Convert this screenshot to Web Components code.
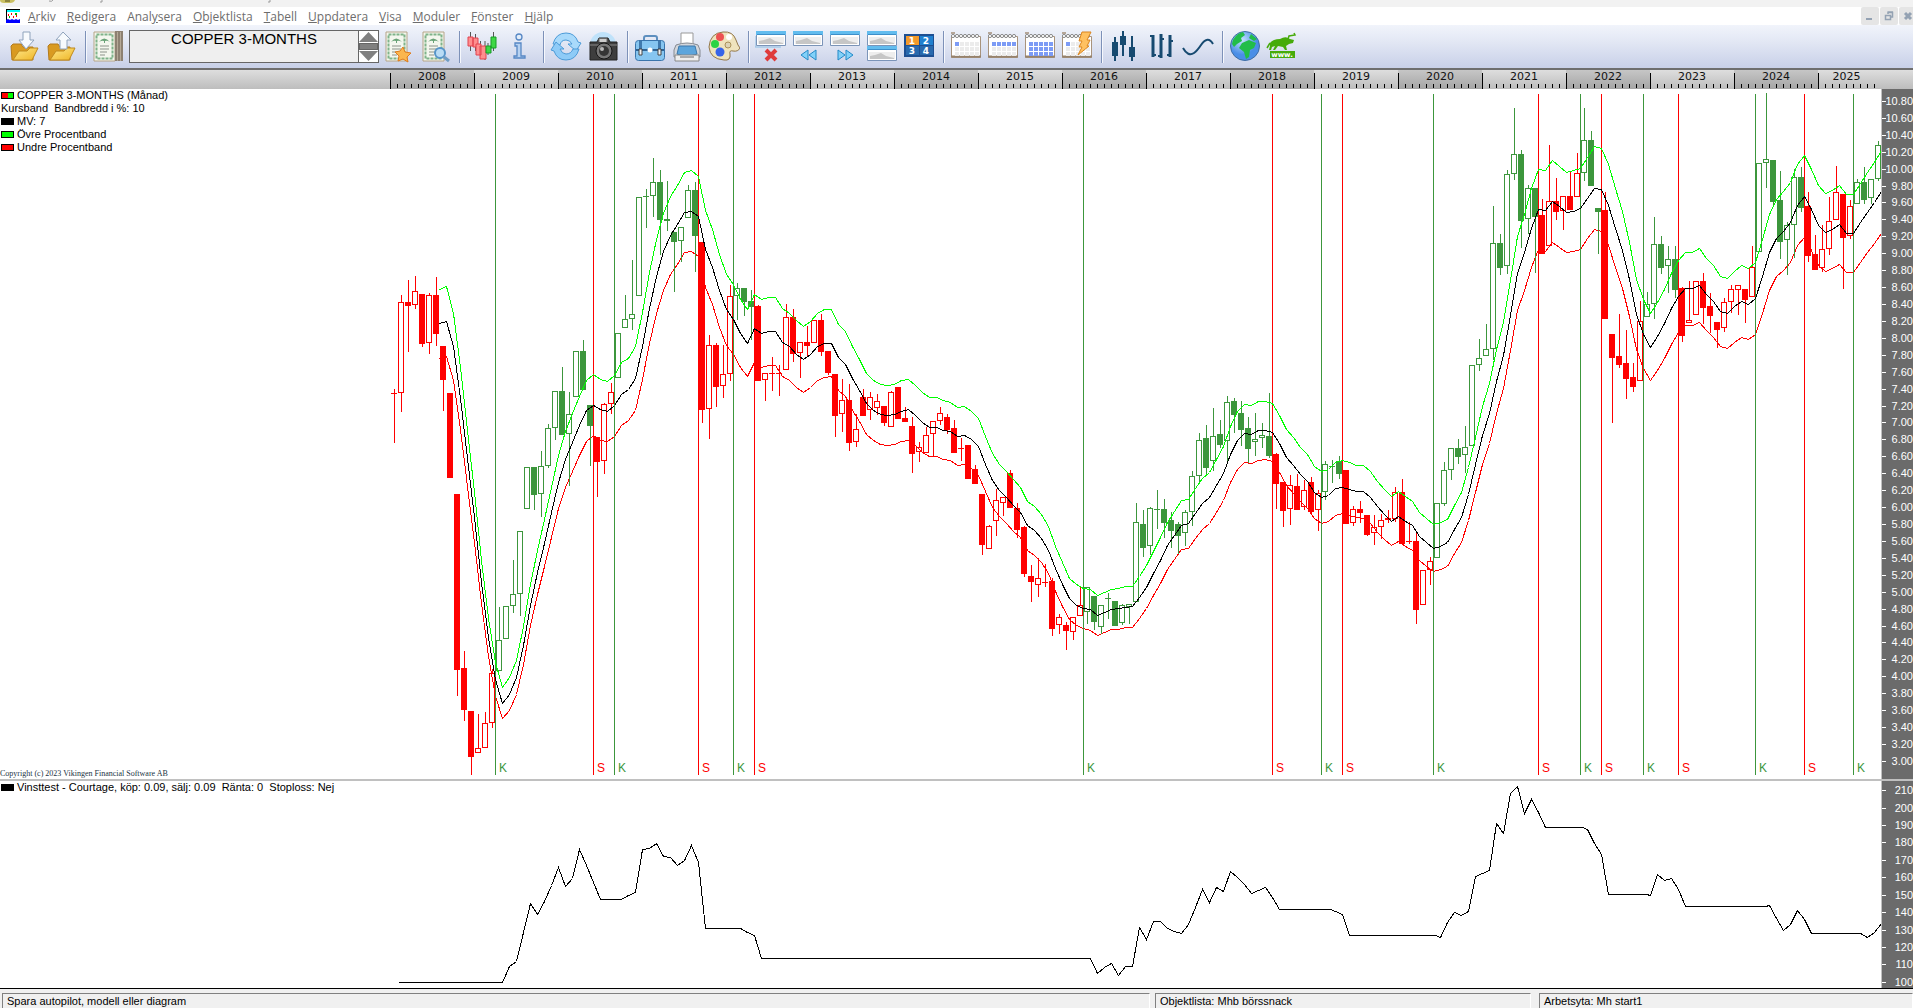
<!DOCTYPE html>
<html lang="sv">
<head>
<meta charset="utf-8">
<title>Vikingen</title>
<style>
	html, body {
		margin: 0;
		height: 100%;
	}

	body {
		display: flex;
		flex-direction: column;
		overflow: hidden;
		background: #fff;
		color: #000;
		font: 12px/13px "Liberation Sans", Arial, sans-serif;
	}
</style>
</head>
<body>
	<title-strip></title-strip>
	<menu-bar>
		<a href="#arkiv"><u>A</u>rkiv</a>
		<a href="#redigera"><u>R</u>edigera</a>
		<a href="#analysera">Anal<u>y</u>sera</a>
		<a href="#objektlista"><u>O</u>bjektlista</a>
		<a href="#tabell"><u>T</u>abell</a>
		<a href="#uppdatera"><u>U</u>ppdatera</a>
		<a href="#visa"><u>V</u>isa</a>
		<a href="#moduler"><u>M</u>oduler</a>
		<a href="#fonster"><u>F</u>önster</a>
		<a href="#hjalp"><u>H</u>jälp</a>
	</menu-bar>
	<tool-bar></tool-bar>
	<time-ruler from="2008" to="2025"></time-ruler>
	<chart-pane class="price">
		<legend-row slot="legend" colors="red,lime">COPPER 3-MONTHS (Månad)</legend-row>
		<legend-row slot="legend">Kursband&nbsp; Bandbredd i %: 10</legend-row>
		<legend-row slot="legend" colors="black">MV: 7</legend-row>
		<legend-row slot="legend" colors="lime">Övre Procentband</legend-row>
		<legend-row slot="legend" colors="red">Undre Procentband</legend-row>
		<price-plot></price-plot>
		<span slot="note">Copyright (c) 2023 Vikingen Financial Software AB</span>
		<value-axis slot="axis" class="prices" from="10.8" to="3" step="0.2" digits="2"></value-axis>
	</chart-pane>
	<chart-pane class="equity" grow>
		<legend-row slot="legend" colors="black">Vinsttest - Courtage, köp: 0.09, sälj: 0.09&nbsp; Ränta: 0&nbsp; Stoploss: Nej</legend-row>
		<equity-plot></equity-plot>
		<value-axis slot="axis" class="values" from="210" to="100" step="10" digits="0"></value-axis>
	</chart-pane>
	<status-bar>
		<span slot="hint">Spara autopilot, modell eller diagram</span>
		<span slot="list">Objektlista: Mhb börssnack</span>
		<span slot="workspace">Arbetsyta: Mh start1</span>
	</status-bar>

<script>
function define(name, html, setup) {
	const template = document.createElement('template')
	template.innerHTML = html
	customElements.define(name, class extends HTMLElement {
		constructor() {
			super()
			this.attachShadow({ mode: 'open' }).appendChild(template.content.cloneNode(true))
		}

		connectedCallback() {
			if (setup) setup(this, this.shadowRoot)
		}
	})
}

/* ---------- title and menu ---------- */

define('title-strip', `
	<style>
		:host { display: block; flex: none; height: 7px; background: #f2f2f2; }
		svg { display: block; }
	</style>
	<svg width="300" height="7" aria-hidden="true">
		<path d="M0 0h15q-1 3-5 3H4Q0 3 0 0z" fill="#c9bf62"/>
		<path d="M5 0h5v2H5z" fill="#8d8540"/>
		<path d="M53 0q-1 2-4 1M102 0v2h-2M270 0v2h-2" fill="none" stroke="#999"/>
	</svg>
`)

define('menu-bar', `
	<style>
		:host {
			display: flex;
			flex: none;
			align-items: center;
			height: 18px;
			padding-left: 6px;
			background: #fff;
			overflow: hidden;
			color: #6d6d6d;
			font: 12px/18px "Open Sans", "Noto Sans", sans-serif;
		}
		nav { display: flex; flex: 1; gap: 11px; margin-left: 8px; padding-top: 2px; }
		::slotted(a) { color: inherit; text-decoration: none; }
		.win { display: flex; gap: 1px; margin-right: -4px; }
		button { width: 18px; height: 18px; padding: 0; border: 0; border-radius: 2px; background: #e5e5e5; }
		svg { display: block; }
	</style>
	<svg width="14" height="14" aria-hidden="true">
		<path d="M0 0h14v14H0z" fill="#fff"/><path d="M0 0h14v3H0z" fill="#0ff"/>
		<path d="M.5 0v14M0 .5h14" fill="none" stroke="#000"/>
		<path d="M0 11l2-1 2 1 2-1 2 1 2-1 2 1 2-1v4H0z" fill="#00f"/>
		<path d="M2 6h1M5 5h1M7 8h1M10 7h1" stroke="red" stroke-width="2"/>
		<path d="M3 8h1M9 5h2" stroke="#0a0" stroke-width="2"/>
	</svg>
	<nav><slot></slot></nav>
	<div class="win">
		<button aria-label="Minimera"><svg width="18" height="18"><path d="M5 12h6" stroke="#94a2b3" stroke-width="2"/></svg></button>
		<button aria-label="Återställ"><svg width="18" height="18"><path d="M8 7V5.500h4.500V10H11M7.500 5h5.500M5.500 8.500h5v4h-5zM5 8.500h6" fill="none" stroke="#94a2b3" stroke-width="1.500"/></svg></button>
		<button aria-label="Stäng"><svg width="18" height="18"><path d="M6 6l6 6M12 6l-6 6" stroke="#94a2b3" stroke-width="3"/></svg></button>
	</div>
`)

/* ---------- toolbar ---------- */

const folder = `
	<path d="M3 15l2-2h8l2 3h10v13H4z" fill="#d99a21" stroke="#b47a1c"/>
	<path d="M5 29l6-9h8l3-3h8l-6 12z" fill="url(#gold)" stroke="#c08a1e"/>`
const certificate = `
	<path d="M2 1h21v29H2z" fill="#f4f7ee" stroke="#b5a487"/>
	<path d="M4.500 3.500h16v24h-16z" fill="none" stroke="#7fb389" stroke-width="2" stroke-dasharray="3 1"/>
	<path d="M7 11q5-7 11 0-3-2-5-1v2h-1v-2q-2-1-5 1z" fill="#6aa377"/>
	<path d="M8 15h9M8 18h9M8 21h7M8 24h5" stroke="#8c938a"/>`
const pane = (y) => `
	<path d="M1.500 ${y + .5}h29v14h-29z" fill="#fff" stroke="#7b94b8"/>
	<path d="M1 ${y}h30v4H1z" fill="#62bcee"/><path d="M2 ${y + 3.5}h28" stroke="#3d8fca"/>
	<path d="M3 ${y + 6}h26v7H3z" fill="#eee"/>
	<path d="M4 ${y + 13}v-3l5-1 6-2 5 3 8 2v1z" fill="#c6c6c6"/>`

function calendar(filled) {
	let out = '<path d="M1.500 5.500h29v21h-29z" fill="#fff" stroke="#a8937c"/><path d="M1 25.500h30" stroke="#96826c" stroke-width="2"/>'
	for (let x = 3; x < 31; x += 4) out += `<circle cx="${x}" cy="5" r="1.600" fill="#fff" stroke="#8b8b8b"/>`
	out += '<path d="M1 2h4" stroke="#b5a698" stroke-width="2"/>'
	for (let row = 0; row < 3; row++) {
		for (let col = 0; col < 5; col++) {
			const on = row * 5 + col < filled
			out += `<path d="M${5 + col * 5} ${11 + row * 5}h4v4h-4z" fill="${on ? '#7c9bf5' : '#ececec'}"/>`
		}
	}
	return out
}

const digits = (cells) => cells.map(([n, x, y, c]) => `
	<path d="M${x} ${y}h13v9h-13z" fill="${c}"/>
	<text x="${x + 6}" y="${y + 8}" text-anchor="middle" font-size="9" font-weight="bold" font-family="DejaVu Sans" fill="#fff">${n}</text>`).join('')

const icons = {
	'Hämta': folder + '<path d="M15 1h7v8h4l-8 9-7-9h4z" fill="#f7fafd" stroke="#8fa3bc"/>',
	'Spara': folder + '<path d="M15 18h7v-9h4l-8-8-7 8h4z" fill="#f7fafd" stroke="#8fa3bc"/>',
	'Lista': certificate + '<path d="M23 0h8v30h-8z" fill="#8d8172"/><path d="M25.500 1v29M28.500 1v29" stroke="#b5a997"/>',
	'Favoriter': `<g transform="translate(2)">${certificate}</g><path d="M21 16l2 5 6 1-4 4 1 5-5-3-5 2 1-5-4-4 5-1z" fill="#fbb64d" stroke="#e07c1c"/>`,
	'Sök': `<g transform="translate(2)">${certificate}</g><circle cx="21" cy="22" r="5" fill="#b9dcf5" stroke="#5795c9" stroke-width="2"/><path d="M25 26l5 4" stroke="#6f9dc4" stroke-width="3"/>`,
	'Diagram': `
		<path d="M4.500 1v19M9.500 3v17M14.500 10v18M19 10v19M22 12v12M27.500 1v19" stroke="#555"/>
		<path d="M2 6h5v9H2zM7 7h5v9H7z" fill="#ff8e8e" stroke="#e2434f"/>
		<path d="M10 13h5v11h-5zM14 15h6v13h-6z" fill="#ff8e8e" stroke="#e2434f"/>
		<path d="M20 15h5v7h-5zM25 6h5v11h-5z" fill="#3ed845" stroke="#169b27"/>`,
	'Information': '<circle cx="16" cy="6" r="3" fill="#e2edfa" stroke="#5687c4" stroke-width="1.300"/><path d="M12 12h6v13h4v2H11v-2h3V15h-2z" fill="#b8d2f1" stroke="#5687c4" stroke-width="1.300"/>',
	'Uppdatera': `
		<path d="M3 13Q6 2 16 2q9 0 12 9l3 1-5 8-8-7h4q-2-4-6-4-5 0-6 5z" fill="#a9dafb" stroke="#4c9bd8"/>
		<path d="M29 18Q26 29 16 29 7 29 4 20l-3-1 5-8 8 7h-4q2 5 6 5 5 0 7-5z" fill="#8ecbf7" stroke="#4c9bd8"/>`,
	'Kamera': `
		<circle cx="16" cy="14" r="13" fill="#bfe2fa"/>
		<path d="M3 11h7l2-4h9l2 4h7v18H3z" fill="#3e3e3e" stroke="#222"/>
		<path d="M12 11V7.500h8V11" fill="#ccc" stroke="#666"/><path d="M3 14h27" stroke="#888"/>
		<circle cx="17" cy="20" r="8" fill="#777" stroke="#171717"/><circle cx="17" cy="20" r="5" fill="#353535"/><circle cx="15" cy="18" r="2" fill="#b9b9b9"/>`,
	'Portfölj': `
		<path d="M10 10V7q0-2 2-2h9q2 0 2 2v3" fill="none" stroke="#5d8fbf" stroke-width="2"/>
		<rect x="1.500" y="9.500" width="29" height="20" rx="3" fill="#86c5f0" stroke="#3a74ab"/>
		<path d="M2 19h28" stroke="#2f6394" stroke-width="2"/><path d="M5 10h3v9H5zM24 10h3v9h-3z" fill="#3f79ad"/>
		<path d="M5 18h3v6H5zM24 18h3v6h-3z" fill="#f3f3f3" stroke="#444"/><circle cx="16" cy="19" r="2.500" fill="#fff"/>`,
	'Skriv ut': `
		<path d="M10 2h12v14H10z" fill="#fff" stroke="#999"/><path d="M5 14q11-4 22 0l2 5v7H3v-7z" fill="#d3d6db" stroke="#858a92"/>
		<path d="M8 15h16l2 8q-10 4-20 0z" fill="#5ca5dc" stroke="#3a77aa"/><path d="M4 24h24v6H4z" fill="#eee" stroke="#888"/><path d="M9 26h14" stroke="#666"/>`,
	'Färger': `
		<path d="M15 1q10-1 13 8 2 6 4 8-2 4-7 3-4-1-3 3 1 7-6 6Q2 28 1 16 2 2 15 1z" fill="#efe3bd" stroke="#92774a"/>
		<circle cx="12" cy="6" r="4" fill="#ed5252"/><circle cx="21" cy="6" r="3" fill="#fff"/><circle cx="7" cy="13" r="4" fill="#2bd344"/>
		<circle cx="12" cy="21" r="4.500" fill="#3764e8"/><circle cx="20" cy="14" r="3" fill="#ddd3b6" stroke="#aa9057"/>`,
	'Stäng fönster': '<path d="M0 5v11h26" fill="none" stroke="#8cbde3"/>' + pane(0) + '<path d="M11 19l10 10M21 19L11 29" stroke="#df3b3b" stroke-width="4"/>',
	'Föregående': pane(0) + '<path d="M16 19l-7 5 7 5zM24 19l-7 5 7 5z" fill="#81d1f9" stroke="#2389c7"/>',
	'Nästa': pane(0) + '<path d="M9 19l7 5-7 5zM17 19l7 5-7 5z" fill="#81d1f9" stroke="#2389c7"/>',
	'Dela': pane(0) + pane(15),
	'Arbetsytor': '<path d="M1 3h30v23H1z" fill="#1d4f92"/>' + digits([[1, 3, 5, '#f39a2b'], [2, 17, 5, '#2080cf'], [3, 3, 15, '#2869ad'], [4, 17, 15, '#2869ad']]),
	'Dag': calendar(1),
	'Vecka': calendar(5),
	'Månad': calendar(15),
	'Intradag': calendar(1) + '<path d="M21 1h9l-4 8h3l-3 6h2L17 24l4-8h-3l3-6h-3z" fill="#ffc161" stroke="#db851e"/>',
	'Candlesticks': '<path d="M7 6v24M15 0v25M24 5v25" stroke="#174a70" stroke-width="2"/><path d="M4 11h6v14H4zM12 5h6v9h-6zM21 16h6v10h-6z" fill="#174a70"/>',
	'Staplar': '<path d="M8 4v22M16 3v24M25 4v22" stroke="#174a70" stroke-width="3"/><path d="M5 5h3M8 24h3M13 25h3M16 8h3M22 24h3M25 10h3" stroke="#174a70" stroke-width="2"/>',
	'Linje': '<path d="M1 17q5 9 11 5 3-2 7-8 7-10 12-1" fill="none" stroke="#174a70" stroke-width="2"/>',
	'Internet': `
		<circle cx="16" cy="15" r="14.500" fill="url(#sea)" stroke="#3e6da4"/>
		<path d="M6 6q3-4 8-5l2 3-4 3 1 3-5 3-3 3-2-3q0-4 3-7zM13 12l7-3 7 3-2 5-4 2-1 7-3 2-2-7-5-4zM22 3l6 5-3 2-5-3z" fill="#22bd49"/>`,
	'Vikingen': `
		<path d="M4 12q3-4 10-4 5-3 8-1l2 1 4 1-1 3-4 1-3 2 1 4h-2l-2-3-5-1-3 4H7l2-4-3 1-1 3H3l1-4z" fill="#46ab0a"/>
		<path d="M1 17l3-5M22 8l1-3 6-1-1-2" fill="none" stroke="#46ab0a" stroke-width="1.500"/><path d="M4 20h25v7H4z" fill="#46ab0a"/>
		<text x="16" y="26" text-anchor="middle" font-size="7" font-weight="bold" font-family="DejaVu Sans" fill="#fff">www.</text>`
}

const groups = [
	['Hämta', 'Spara'],
	['Lista', null, 'Favoriter', 'Sök'],
	['Diagram', 'Information'],
	['Uppdatera', 'Kamera'],
	['Portfölj', 'Skriv ut', 'Färger'],
	['Stäng fönster', 'Föregående', 'Nästa', 'Dela', 'Arbetsytor'],
	['Dag', 'Vecka', 'Månad', 'Intradag'],
	['Candlesticks', 'Staplar', 'Linje'],
	['Internet', 'Vikingen']
]

define('object-picker', `
	<style>
		:host {
			display: flex;
			box-sizing: border-box;
			width: 250px;
			height: 33px;
			margin-left: 3px;
			border: 1px solid #666;
			background: #efefef;
		}
		input {
			flex: 1;
			min-width: 0;
			height: 16px;
			padding: 0;
			border: 0;
			background: none;
			text-align: center;
			color: #000;
			font: 15px/16px "Liberation Sans", Arial, sans-serif;
		}
		div { display: flex; flex-direction: column; width: 19px; border-left: 1px solid #666; background: #fff; }
		button { flex: 1; padding: 0; border: 0; background: none; }
		i { height: 7px; background: #808080; border: 1px solid #666; box-sizing: border-box; }
		svg { display: block; }
	</style>
	<input aria-label="Objekt" value="COPPER 3-MONTHS" readonly>
	<div>
		<button aria-label="Upp"><svg width="19" height="12"><path d="M0 11l9.500-10L19 11z" fill="#808080"/></svg></button>
		<i></i>
		<button aria-label="Ned"><svg width="19" height="12"><path d="M0 1h19L9.500 11z" fill="#808080"/></svg></button>
	</div>
`)

define('tool-bar', `
	<style>
		:host {
			display: flex;
			flex: none;
			align-items: flex-start;
			height: 38px;
			padding: 5px 0 0 5px;
			background: linear-gradient(#f1f4fb, #e2e7f4 40%, #c8d0e8);
		}
		button { width: 37px; height: 33px; padding: 0; border: 0; background: none; }
		button svg { display: block; margin: 0 auto; }
		hr { width: 1px; height: 32px; margin: 1px 2px 0 6px; border: 0; background: #7d91b8; border-right: 1px solid #f6f8fd; }
	</style>
	<svg width="0" height="0" style="position:absolute" aria-hidden="true">
		<linearGradient id="gold" x2="1" y2="1"><stop stop-color="#ffe98d"/><stop offset="1" stop-color="#eeb423"/></linearGradient>
		<radialGradient id="sea" cx=".4" cy=".3"><stop stop-color="#c4e2ff"/><stop offset="1" stop-color="#4a8ee6"/></radialGradient>
	</svg>
`, (host, root) => {
	groups.forEach((group, n) => {
		if (n) root.appendChild(document.createElement('hr'))
		group.forEach((name) => {
			if (!name) {
				root.appendChild(document.createElement('object-picker'))
				return
			}
			const button = document.createElement('button')
			button.setAttribute('aria-label', name)
			button.innerHTML = `<svg width="32" height="32">${icons[name]}</svg>`
			root.appendChild(button)
		})
	})
})

/* ---------- ruler ---------- */

define('time-ruler', `
	<style>
		:host {
			display: flex;
			flex: none;
			height: 19px;
			padding-left: 390px;
			border-top: 2px solid #6e6e6e;
			background: linear-gradient(#dedede, #bdbdbd);
			color: #111;
			font: 11px/14px "DejaVu Sans", Verdana, sans-serif;
		}
		span { position: relative; width: 84px; text-align: center; }
		span:nth-of-type(odd) { background: linear-gradient(#c6c6c6, #a5a5a5); }
		span:last-of-type { width: 57px; background: none; }
		span::before {
			content: "";
			position: absolute;
			left: 0;
			top: 3px;
			bottom: 0;
			width: 1px;
			background: #000;
		}
		span::after {
			content: "";
			position: absolute;
			left: 0;
			right: 0;
			bottom: 1px;
			height: 4px;
			background: repeating-linear-gradient(90deg, #000 0 1px, transparent 1px 7px);
		}
	</style>
`, (host, root) => {
	for (let y = +host.getAttribute('from'); y <= +host.getAttribute('to'); y++) {
		const span = document.createElement('span')
		span.textContent = y
		root.appendChild(span)
	}
})

/* ---------- panes ---------- */

define('legend-row', `
	<style>
		:host { display: flex; align-items: center; height: 13px; gap: 3px; padding-left: 1px; white-space: nowrap; font-size: 11px; }
		i { display: flex; box-sizing: border-box; width: 13px; height: 7px; border: 1px solid #000; }
		b { flex: 1; }
		i:empty { display: none; }
	</style>
	<i></i><slot></slot>
`, (host, root) => {
	const colors = host.getAttribute('colors')
	if (!colors) return
	root.querySelector('i').innerHTML = colors.split(',').map((c) => `<b style="background:${c}"></b>`).join('')
})

define('chart-pane', `
	<style>
		:host { display: flex; flex: none; min-height: 0; overflow: hidden; }
		:host([grow]) { flex: 1; border-top: 2px solid #c0c0c0; border-bottom: 1px solid #000; }
		main { flex: 1; position: relative; min-width: 0; overflow: hidden; }
		.legend { position: absolute; left: 0; top: 0; }
		.note {
			position: absolute;
			left: 0;
			bottom: 0;
			white-space: nowrap;
			color: #234;
			font: 8px/10px "Liberation Serif", "Times New Roman", serif;
		}
		aside { display: flex; width: 31px; background: #6b6b6b; border-left: 1px solid #c0c0c0; }
	</style>
	<main>
		<slot></slot>
		<div class="legend"><slot name="legend"></slot></div>
		<div class="note"><slot name="note"></slot></div>
	</main>
	<aside><slot name="axis"></slot></aside>
`)

define('value-axis', `
	<style>
		:host { display: flex; flex: 1; flex-direction: column; color: #fff; font-size: 11px; }
		:host(.prices) { padding: 4px 0 9px; }
		:host(.values) { height: 209px; padding-top: 1px; }
		span { display: flex; flex: 1; align-items: center; justify-content: space-between; min-height: 0; }
		span::before { content: ""; width: 4px; margin-right: -1px; height: 1px; background: #fff; }
	</style>
`, (host, root) => {
	const get = (name) => +host.getAttribute(name)
	for (let v = get('from'); v > get('to') - get('step') / 2; v -= get('step')) {
		const span = document.createElement('span')
		span.textContent = v.toFixed(get('digits'))
		root.appendChild(span)
	}
})

/* ---------- plots ---------- */

const STEP = 7
const FIRST = 394
const MARK_OFFSET = 3
const RED = '#f00'
const GREEN = '#3c963c'

// K = köp, S = sälj, at the number of the last candle before the signal
const signals = [
	[14, 'K'], [28, 'S'], [31, 'K'], [43, 'S'], [48, 'K'], [51, 'S'], [98, 'K'], [125, 'S'], [132, 'K'], [135, 'S'],
	[148, 'K'], [163, 'S'], [169, 'K'], [172, 'S'], [178, 'K'], [183, 'S'], [194, 'K'], [201, 'S'], [208, 'K']
]

// high, body top, body bottom, low; f marks a falling month
const candles = `
389 393 393 442,295 302 392 411,280 302 305 351 f,276 291 304 308,294 294 343 346 f,293 295 342 353,277 295 333 345 f,
346 346 379 410 f,393 393 477 477 f,494 494 669 695 f,651 668 709 720 f,711 711 756 774 f,714 748 752 752,712 723 747 747,
669 673 722 727,607 640 670 670,606 606 638 638,560 594 605 612,531 531 593 615,467 467 508 508,467 467 494 509 f,
451 466 493 516,424 428 465 467,391 391 427 439,367 391 434 434 f,392 414 433 485,351 351 396 396,340 351 389 389 f,
405 405 425 465 f,437 437 461 496 f,403 404 460 473,383 392 403 413,333 333 377 377,295 319 327 327,260 314 318 329,
197 197 295 295,189 196 196 227,158 182 195 216,170 182 219 254 f,181 219 220 230 f,232 232 241 291 f,227 227 240 261,
185 190 217 217,182 190 235 271 f,242 242 409 422 f,335 345 408 438,343 345 386 406 f,345 374 385 397,285 296 373 380,
283 288 295 319,288 288 301 315 f,290 301 306 339 f,305 306 380 380 f,373 373 379 400,357 373 373 390,365 373 373 395,
304 317 369 369,309 317 353 361 f,342 342 352 377,326 342 345 356 f,320 320 342 342,314 320 351 355 f,351 351 372 374 f,
374 374 415 436 f,379 400 413 431,384 400 442 450 f,414 429 441 446,389 397 415 415 f,392 397 409 419,394 401 407 414,
406 406 422 425 f,391 392 426 426,387 387 418 418 f,407 418 421 421 f,417 426 453 472 f,442 447 451 461,427 435 452 452,
421 421 433 455,407 413 420 424,414 417 429 433 f,420 428 452 452 f,438 448 448 460,445 445 478 478 f,465 469 483 483 f,
494 494 544 554 f,525 526 548 548,489 500 520 535,497 497 502 515,470 473 507 507 f,503 508 529 537 f,526 527 573 576 f,
565 576 581 601 f,558 578 584 596,564 582 582 586,578 581 628 635 f,614 617 624 633,622 625 630 649 f,617 617 631 639,
587 605 615 615,587 587 611 623,596 596 621 629 f,605 605 626 633,593 598 598 618,601 601 625 625 f,604 605 622 624,
604 604 606 623,503 522 601 601,510 524 547 556 f,507 508 545 554,490 509 509 528,499 509 522 537 f,512 520 530 547 f,
522 524 535 553 f,510 512 532 545,471 476 511 525,433 440 475 483,425 438 467 475 f,408 436 460 470,420 434 444 447 f,
396 402 440 460,398 401 414 432 f,401 413 429 445 f,417 428 448 462 f,413 439 441 455,423 435 437 447,393 436 455 457 f,
453 454 483 508 f,482 482 510 526 f,475 485 508 524,474 486 509 509 f,480 490 506 509,477 482 511 513 f,490 493 509 530,
461 464 491 499,460 466 466 482,456 461 473 478 f,470 470 523 523 f,506 509 522 525,501 509 512 522 f,515 515 534 535 f,
515 527 532 544,514 520 526 538,510 518 519 522 f,487 492 518 521,479 492 543 543 f,522 541 541 543,531 541 609 623 f,
570 570 604 604,557 561 569 584,503 503 557 557,462 470 503 505,448 448 469 479,439 448 456 463 f,426 447 454 472,
365 365 445 445,339 358 364 370,324 349 355 355,206 243 348 359,234 243 267 274 f,170 174 265 273,108 154 173 179,
150 154 220 247 f,185 188 218 233,188 188 216 272 f,199 215 253 253 f,145 201 245 245,178 201 211 219 f,196 196 210 229,
172 196 209 209 f,153 173 196 196,108 140 172 180,131 140 185 185 f,208 208 211 253 f,192 210 318 318 f,334 334 357 422 f,
314 356 364 367 f,330 363 378 398 f,363 377 386 391 f,301 321 380 380,292 304 316 316,217 244 303 318,236 244 267 273 f,
246 259 265 292,246 259 289 297 f,287 288 335 341 f,281 320 322 322,281 281 314 314,273 281 307 323 f,293 306 315 332 f,
322 322 329 347 f,298 302 327 331,285 289 301 312,285 285 289 314,289 289 299 322 f,246 267 296 296,163 163 251 251,
93 159 162 187,160 160 201 205 f,171 200 241 258 f,222 225 239 274,169 177 224 257,167 177 207 211 f,192 206 255 261 f,
235 254 269 269 f,225 249 267 271,197 221 248 254,166 192 219 219,194 194 237 288 f,200 206 235 238,179 182 203 203,
167 182 199 203 f,179 179 197 203,141 145 178 180`.trim().split(/,\s*/).map((row) => {
	const [high, top, bottom, low, falling] = row.split(' ')
	return { high: +high, top: +top, bottom: +bottom, low: +low, falling: !!falling }
})

const markX = (i) => FIRST + i * STEP + MARK_OFFSET
const toPrice = (y) => 10.8 - (y - 101) / 84.65
const toY = (price) => Math.round(101 + (10.8 - price) * 84.65)

function drawCandle(c, i) {
	const x = FIRST + i * STEP
	const last = signals.filter((s) => s[0] < i).pop()
	const color = last && last[1] === 'K' ? GREEN : RED
	let out = ''
	if (c.high < c.top) out += `<path d="M${x} ${c.high}h1V${c.top}h-1z" fill="${color}"/>`
	if (c.low > c.bottom) out += `<path d="M${x} ${c.bottom}h1V${c.low + 1}h-1z" fill="${color}"/>`
	if (c.falling || c.top === c.bottom) {
		out += `<path d="M${x - 3} ${c.top}h6V${c.bottom + 1}h-6z" fill="${color}"/>`
	} else {
		out += `<path d="M${x - 2.5} ${c.top + .5}h5V${c.bottom + .5}h-5z" fill="none" stroke="${color}"/>`
	}
	return out
}

// 7 month mean of the closes, scaled for the bands
function band(factor, color) {
	const closes = candles.map((c) => c.falling ? c.bottom : c.top)
	const points = []
	for (let i = 6; i < closes.length; i++) {
		const mean = closes.slice(i - 6, i + 1).reduce((a, b) => a + b) / 7
		points.push(`${markX(i)},${toY(toPrice(mean) * factor)}`)
	}
	return `<polyline points="${points.join(' ')}" transform="translate(.5 .5)" fill="none" stroke="${color}"/>`
}

define('price-plot', `
	<style>
		:host { display: block; background: #fff; }
		svg { display: block; width: 100%; height: 690px; shape-rendering: crispEdges; }
		text { font: 12px "Liberation Sans", Arial, sans-serif; }
	</style>
	<svg><g transform="translate(0 -89)"></g></svg>
`, (host, root) => {
	root.querySelector('g').innerHTML =
		band(.95, RED) +
		candles.map(drawCandle).join('') +
		signals.map(([i, kind]) => {
			const color = kind === 'K' ? GREEN : RED
			return `<path d="M${markX(i)} 94h1v681h-1z" fill="${color}"/><text x="${markX(i) + 4}" y="772" fill="${color}">${kind}</text>`
		}).join('') +
		band(1.05, '#0f0') + band(1, '#000')
})

const equity = `398,982 502,982 509,966 516,961 523,932 530,903 537,914 544,901 551,885 558,867 565,886 572,878 579,849
586,865 593,882 600,899 621,899 628,895 635,892 642,849 649,848 656,843 663,856 670,857 677,865 684,860 691,845 698,862
705,928 740,928 747,932 754,935 761,958 1090,958 1097,973 1104,967 1111,963 1118,975 1125,966 1132,966 1139,927 1146,939
1153,921 1160,921 1167,928 1174,931 1181,933 1188,924 1195,907 1202,889 1209,902 1216,887 1223,891 1230,871 1237,877
1244,884 1251,893 1258,890 1265,887 1272,897 1279,909 1330,909 1335,911 1342,914 1349,935 1435,935 1440,937 1447,922
1454,912 1461,915 1468,911 1475,876 1482,873 1489,870 1496,823 1503,833 1510,793 1517,786 1524,813 1531,799 1538,812
1545,827 1582,827 1587,829 1594,843 1601,854 1608,894 1646,894 1650,895 1657,874 1664,880 1671,878 1678,889 1685,906
1765,906 1769,905 1776,918 1783,930 1790,924 1797,910 1804,919 1811,933 1860,933 1867,937 1874,932 1881,923`

define('equity-plot', `
	<style>
		:host { display: block; height: 100%; background: #fff; }
		svg { display: block; width: 100%; height: 100%; shape-rendering: crispEdges; }
	</style>
	<svg><polyline points="${equity}" transform="translate(.5 -780.5)" fill="none" stroke="#000"/></svg>
`)

/* ---------- status ---------- */

define('status-bar', `
	<style>
		:host { display: flex; flex: none; gap: 5px; height: 15px; padding: 4px 0 0 2px; background: #f0f0f0; font-size: 11px; overflow: hidden; }
		div {
			box-sizing: border-box;
			height: 20px;
			padding: 1px 4px;
			border: 1px solid #808080;
			border-right-color: #fff;
			white-space: nowrap;
		}
		.hint { flex: 1; }
		.list { width: 376px; margin-right: 3px; }
		.workspace { width: 374px; }
	</style>
	<div class="hint"><slot name="hint"></slot></div>
	<div class="list"><slot name="list"></slot></div>
	<div class="workspace"><slot name="workspace"></slot></div>
`)
</script>
</body>
</html>
